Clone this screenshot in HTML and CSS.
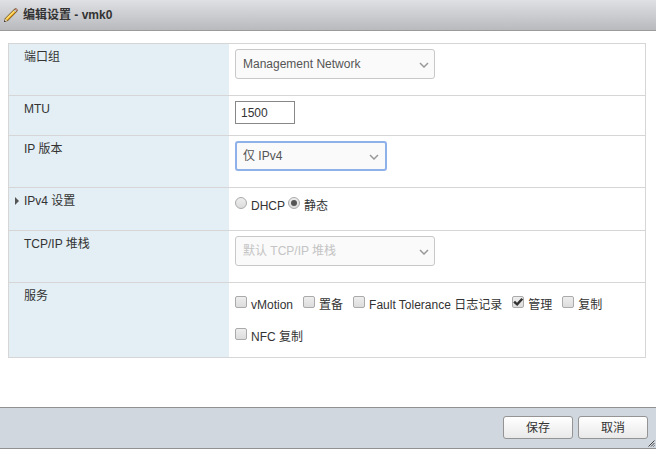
FILE: index.html
```html
<!DOCTYPE html>
<html lang="zh-CN">
<head>
    <meta charset="UTF-8">
    <meta name="viewport" content="width=device-width, initial-scale=1.0">
    <title>编辑设置 - vmk0</title>
    <link rel="stylesheet" href="styles.css">
</head>
<body>
    <header class="dialog-header">
        <svg class="pencil" width="16" height="16" viewBox="0 0 16 16">
            <path d="M1.2 14.8 L2 11.2 L11.4 1.8 Q12.8 0.6 14.1 1.9 Q15.4 3.2 14.2 4.6 L4.8 14 Z" fill="#6b4f1c"/>
            <path d="M2.6 11.7 L10.8 3.5 L12.5 5.2 L4.3 13.4 Z" fill="#f2a91c"/>
            <path d="M2.6 11.7 L10.8 3.5 L11.8 4.5 L3.6 12.7 Z" fill="#ffe27a"/>
            <path d="M10.9 3.4 L11.9 2.4 L13.6 4.1 L12.6 5.1 Z" fill="#d5d8dc"/>
            <path d="M12 2.3 Q13.1 1.5 13.8 2.2 Q14.5 2.9 13.7 4 Z" fill="#e08c94"/>
            <path d="M1.8 14.2 L2.5 11.8 L4.2 13.5 Z" fill="#f7e6bf"/>
            <path d="M1 15 L1.5 13.2 L2.8 14.5 Z" fill="#222"/>
        </svg>
        <h1>编辑设置 - vmk0</h1>
    </header>

    <form id="settings-form" class="dialog-body">
        <div class="settings">
            <div class="row">
                <label class="row-label" for="port-group">端口组</label>
                <div class="row-value">
                    <div class="select-box">
                        <select id="port-group" name="port_group">
                            <option>Management Network</option>
                        </select>
                        <svg class="chevron" width="10" height="6" viewBox="0 0 10 6"><path d="M1 1 L5 5 L9 1"/></svg>
                    </div>
                </div>
            </div>
            <div class="row">
                <label class="row-label" for="mtu">MTU</label>
                <div class="row-value row-value-text">
                    <input type="text" id="mtu" name="mtu" class="text-input" value="1500">
                </div>
            </div>
            <div class="row">
                <label class="row-label" for="ip-version">IP 版本</label>
                <div class="row-value">
                    <div class="select-box select-active">
                        <select id="ip-version" name="ip_version">
                            <option>仅 IPv4</option>
                            <option>仅 IPv6</option>
                            <option>IPv4 和 IPv6</option>
                        </select>
                        <svg class="chevron" width="10" height="6" viewBox="0 0 10 6"><path d="M1 1 L5 5 L9 1"/></svg>
                    </div>
                </div>
            </div>
            <div class="row">
                <div class="row-label row-label-expand" id="ipv4-label">
                    <svg class="expand-arrow" width="4" height="8" viewBox="0 0 4 8"><path d="M0 0 L4 4 L0 8 Z"/></svg>
                    <span>IPv4 设置</span>
                </div>
                <div class="row-value row-value-radio" role="radiogroup" aria-labelledby="ipv4-label">
                    <label class="option"><input type="radio" name="ipv4"><span>DHCP</span></label>
                    <label class="option"><input type="radio" name="ipv4" checked><span>静态</span></label>
                </div>
            </div>
            <div class="row">
                <label class="row-label" for="tcpip-stack">TCP/IP 堆栈</label>
                <div class="row-value">
                    <div class="select-box">
                        <select id="tcpip-stack" name="tcpip_stack" disabled>
                            <option>默认 TCP/IP 堆栈</option>
                        </select>
                        <svg class="chevron" width="10" height="6" viewBox="0 0 10 6"><path d="M1 1 L5 5 L9 1"/></svg>
                    </div>
                </div>
            </div>
            <div class="row">
                <div class="row-label" id="services-label">服务</div>
                <div class="row-value row-value-services" role="group" aria-labelledby="services-label">
                    <label class="option"><input type="checkbox" name="vmotion"><span>vMotion</span></label>
                    <label class="option"><input type="checkbox" name="provisioning"><span>置备</span></label>
                    <label class="option"><input type="checkbox" name="ft"><span>Fault Tolerance 日志记录</span></label>
                    <label class="option"><input type="checkbox" name="management" checked><span>管理</span></label>
                    <label class="option"><input type="checkbox" name="replication"><span>复制</span></label>
                    <label class="option"><input type="checkbox" name="nfc"><span>NFC 复制</span></label>
                </div>
            </div>
        </div>
    </form>

    <footer class="dialog-footer">
        <button type="submit" form="settings-form">保存</button>
        <button type="button">取消</button>
        <svg class="resize-grip" width="7" height="7" viewBox="0 0 7 7">
            <path d="M0.5 6.5 L6.5 0.5 M3 6.5 L6.5 3 M5.5 6.5 L6.5 5.5"/>
        </svg>
    </footer>
</body>
</html>
```

FILE: styles.css
```css
* {
    box-sizing: border-box;
}
body {
    margin: 0;
    min-height: 100vh;
    display: flex;
    flex-direction: column;
    background-color: #fff;
    color: #333;
    font-family: "Liberation Sans", "Noto Sans CJK SC", sans-serif;
    font-size: 12px;
    line-height: 18px;
}
input, select, button {
    font: inherit;
    color: inherit;
    margin: 0;
}

/* header */
.dialog-header {
    display: flex;
    align-items: center;
    gap: 4px;
    height: 31px;
    padding: 0 3px;
    border-bottom: 1px solid #9b9b9b;
    background: linear-gradient(#dfe0e4, #b9babd);
}
.dialog-header h1 {
    margin: 0;
    font-size: 12px;
    font-weight: bold;
}

/* settings */
.dialog-body {
    flex: 1;
    padding: 12px 10px 12px 8px;
}
.settings {
    border: 1px solid #d6d6d6;
}
.row {
    display: grid;
    grid-template-columns: 220px 1fr;
}
.row + .row {
    border-top: 1px solid #d6d6d6;
}
.row-label {
    padding: 4px 15px;
    background-color: #e3eff5;
}
.row-label-expand {
    display: flex;
    align-items: flex-start;
    gap: 5px;
    padding-left: 6px;
}
.expand-arrow {
    margin-top: 5px;
    fill: #555;
}
.row-value {
    padding: 5px 6px 16px;
}
.row-value-text {
    padding-bottom: 11px;
}
.row-value-radio {
    display: flex;
    gap: 3px;
    padding-top: 6px;
    padding-bottom: 12px;
    line-height: 24px;
}
.row-value-services {
    display: flex;
    flex-wrap: wrap;
    column-gap: 10px;
    padding-top: 6px;
    padding-bottom: 4px;
    line-height: 32px;
}

/* select */
.select-box {
    position: relative;
    width: 200px;
    height: 30px;
}
.select-box select {
    appearance: none;
    width: 100%;
    height: 100%;
    padding: 0 24px 0 7px;
    border: 1px solid #c8c8c8;
    border-radius: 3px;
    background-color: #fafafa;
    color: #555;
}
.select-box select:disabled {
    color: #c4c4c4;
    opacity: 1;
}
.select-active {
    width: 152px;
}
.select-active select {
    padding-left: 6px;
    border: 2px solid #8fb1ea;
}
.chevron {
    position: absolute;
    right: 6px;
    top: 13px;
    fill: none;
    stroke: #999;
    stroke-width: 1.5;
    pointer-events: none;
}
.select-active .chevron {
    right: 8px;
}

.text-input {
    display: block;
    width: 60px;
    height: 23px;
    padding: 0 5px;
    border: 1px solid #888;
    background-color: #fff;
}

/* radios and checkboxes */
.option {
    display: flex;
    align-items: center;
    gap: 4px;
}
.option input {
    appearance: none;
    display: grid;
    place-items: center;
    width: 12px;
    height: 12px;
    margin-bottom: 6px;
    border: 1px solid #aaa;
    border-radius: 2px;
    background: linear-gradient(#eee, #dcdcdc);
}
.option input[type="radio"] {
    border-radius: 50%;
}
.option input[type="radio"]:checked::before {
    content: "";
    width: 6px;
    height: 6px;
    border-radius: 50%;
    background-color: #555;
}
.option input[type="checkbox"]:checked::before {
    content: "";
    width: 10px;
    height: 8px;
    background-color: #333;
    clip-path: polygon(0 55%, 18% 35%, 38% 58%, 82% 0, 100% 18%, 40% 100%);
}

/* footer */
.dialog-footer {
    position: relative;
    display: flex;
    justify-content: flex-end;
    gap: 5px;
    padding: 8px 8px 9px;
    border-top: 1px solid #919191;
    border-bottom: 1px solid #919191;
    background-color: #d0d7df;
}
.dialog-footer button {
    width: 70px;
    height: 23px;
    padding: 0;
    border: 1px solid #949494;
    border-radius: 3px;
    background: linear-gradient(#fff, #e9e9e9);
    cursor: pointer;
}
.resize-grip {
    position: absolute;
    right: 1px;
    bottom: 1px;
    fill: none;
    stroke: #444;
}
```
